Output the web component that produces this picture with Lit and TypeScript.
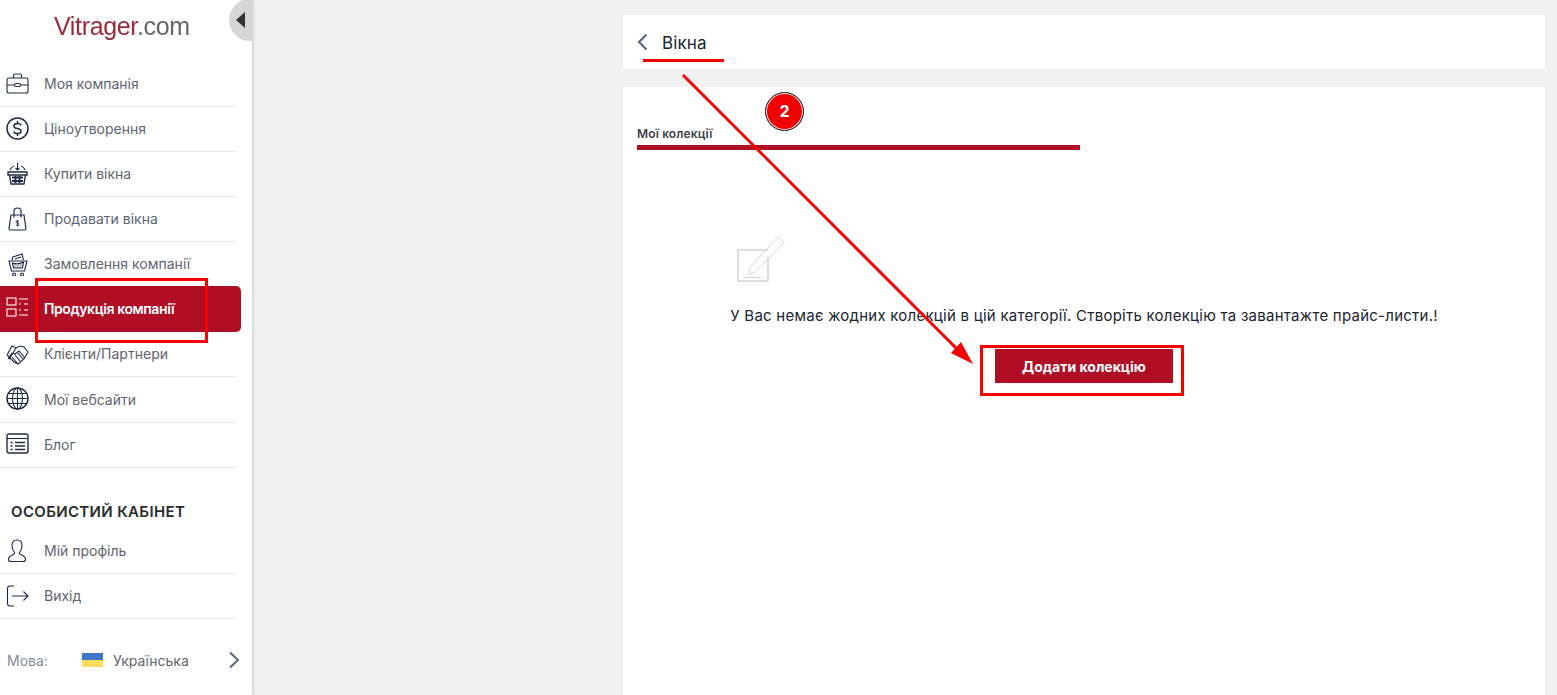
import { LitElement, css, html, svg } from 'lit';
import { customElement } from 'lit/decorators.js';

const icons: Record<string, unknown> = {
  briefcase: svg`<rect x="1" y="6" width="21" height="15" rx="2"/><path d="M7.500 6V3.500q0-1.500 1.500-1.500h5q1.500 0 1.500 1.500V6M1 13h7.500M14.500 13H22"/><rect x="8.500" y="11.500" width="6" height="3" rx="1.500"/>`,
  dollar: svg`<circle cx="11.500" cy="11.500" r="10.500" stroke-width="1.500"/><path d="M15 8.500q-.5-2-3.500-2-3.500 0-3.500 2.400 0 2.100 3.500 2.600t3.500 2.700q0 2.400-3.500 2.400-3 0-3.700-2.200M11.500 4v2.500M11.500 16.500V19" stroke-width="1.500"/>`,
  basket: svg`<path d="M4 8q1-3 4-4M19 8q-1-3-4-4M11.500 1v7M9.500 6l2 2 2-2"/><path d="M2 10h19v3H2zM3.500 13l1.500 9h13l1.500-9" stroke-width="1.400"/><path d="M6 15.500h11M6 19h11M9.500 14v7M13.500 14v7" stroke-width="1.800"/>`,
  bag: svg`<path d="M5 8h13l2 13.500q0 1.500-1.500 1.500h-14Q3 23 3 21.500zM8 10.500V4q0-3 3.500-3T15 4v6.500" stroke-width="1.200"/><path d="M13 14.500q-.5-.8-1.500-.8-1.500 0-1.500 1.100t1.500 1.300 1.500 1.300-1.500 1.100q-1 0-1.500-.8M11.500 13v6.500" stroke-width=".9"/>`,
  cart: svg`<path d="M3 9h18l-2.500 10H5.500zM6 8l1-3 9-3 1.500 6M9 7l6-2"/><path d="M6.500 11q5 2 11-1l-1 6h-9z" fill="#1f2a44" fill-opacity=".25"/><circle cx="8" cy="22.500" r="1.500"/><circle cx="16" cy="22.500" r="1.500"/>`,
  products: svg`<rect x="1" y="1" width="9" height="7"/><rect x="1" y="12" width="9" height="7"/><path d="M13 2h9M13 7h2M18 7h4M13 13h2M18 13h4M13 18h9"/>`,
  hands: svg`<path d="M1 13l5-9 4 2 4-2 4 1 4 5-4 7-6 5-4-2-3-3zM10 6l-3 5 2 1 4-3 6 7M6 15l5 6M9 13l5 6M12 11l5 6"/><path d="M2.500 17l4-6" stroke-width="2"/>`,
  globe: svg`<circle cx="11.500" cy="11.500" r="10.500" stroke-width="1.400"/><ellipse cx="11.500" cy="11.500" rx="5" ry="10.500"/><path d="M11.500 1v21M1 11.500h21M2.500 6.500h18M2.500 16.500h18"/>`,
  blog: svg`<rect x="1" y="1" width="21" height="19" rx="2" stroke-width="1.400"/><path d="M1 5.500h21"/><path d="M4.500 9.500h2M4.500 13h2M4.500 16.500h2M9 9.500h10M9 13h10M9 16.500h10" stroke-width="1.600"/>`,
  profile: svg`<path d="M8.500 13.500q-2.500-3-2.500-7 0-5.500 5-5.500t5 5.500q0 4-2.500 7-.5 1.500 2 2.500 4 1.500 4 4.500 0 2-2.500 2H5q-2.500 0-2.500-2 0-3 4-4.500 2.500-1 2-2.500z"/>`,
  logout: svg`<path d="M8 2H4Q1.500 2 1.500 4.500v15Q1.500 22 4 22h4M6 12h16M17.500 7.500 22 12l-4.500 4.500"/>`,
};

const menu = [
  ['briefcase', 'Моя компанія'],
  ['dollar', 'Ціноутворення'],
  ['basket', 'Купити вікна'],
  ['bag', 'Продавати вікна'],
  ['cart', 'Замовлення компанії'],
  ['products', 'Продукція компанії'],
  ['hands', 'Клієнти/Партнери'],
  ['globe', 'Мої вебсайти'],
  ['blog', 'Блог'],
];

const cabinet = [
  ['profile', 'Мій профіль'],
  ['logout', 'Вихід'],
];

@customElement('app-root')
export class AppRoot extends LitElement {
  static override styles = css`
    :host {
      display: block;
      position: relative;
      height: 100vh;
      overflow: hidden;
      background: #f1f1f1;
      font-family: Inter, 'Noto Sans', sans-serif;
      color: #1c2230;
    }
    .page {
      display: flex;
      height: 100%;
    }
    .sidebar {
      flex: 0 0 252px;
      position: relative;
      overflow: hidden;
      background: #fff;
      box-shadow: 1px 0 3px rgba(0, 0, 0, 0.18);
      box-sizing: border-box;
      padding-top: 62px;
    }
    .toggle {
      position: absolute;
      left: 229px;
      top: -1px;
      width: 42px;
      height: 42px;
      border-radius: 50%;
      background: #d6d6d6;
    }
    .toggle::after {
      content: '';
      position: absolute;
      left: 7px;
      top: 13px;
      border-style: solid;
      border-width: 8px 9px 8px 0;
      border-color: transparent #333 transparent transparent;
    }
    .logo {
      position: absolute;
      left: 54px;
      top: 12px;
      font: 25px 'Liberation Sans', Arial, sans-serif;
      letter-spacing: -0.35px;
      color: #9c2b3c;
      filter: blur(0.3px);
    }
    .logo span {
      color: #666;
    }
    .item {
      display: flex;
      align-items: center;
      box-sizing: border-box;
      height: 45px;
      width: 236px;
      padding-bottom: 1px;
      border-bottom: 1px solid #e8e8e8;
      font-size: 14px;
      color: #5e6471;
    }
    .item:has(+ .active) {
      height: 44px;
      border-bottom: 0;
    }
    .active + .item + .item {
      height: 46px;
    }
    .item svg {
      flex: 0 0 24px;
      width: 24px;
      height: 24px;
      margin: 0 14px 0 6px;
      fill: none;
      stroke: #1f2a44;
      stroke-width: 1.100;
    }
    .item.active {
      width: 241px;
      height: 46px;
      border: 0;
      border-radius: 0 5px 5px 0;
      background: #b00e24;
      color: #fff;
      font-weight: 600;
      letter-spacing: -0.4px;
    }
    .item.active svg {
      stroke: #fff;
    }
    .section {
      margin: 33px 0 0 11px;
      height: 22px;
      line-height: 22px;
      font-size: 15px;
      font-weight: 600;
      letter-spacing: 0.35px;
      color: #2b2b2b;
    }
    .cabinet {
      margin-top: 6px;
    }
    .lang {
      display: flex;
      align-items: center;
      margin-top: 19px;
      padding-left: 7px;
      width: 233px;
      height: 44px;
      font-size: 14px;
      color: #5e6471;
    }
    .lang .label {
      width: 75px;
      color: #858b97;
    }
    .flag {
      width: 21px;
      height: 14px;
      margin-right: 10px;
      background: linear-gradient(#3f78c9 50%, #ffdc5c 50%);
    }
    .lang .name {
      flex: 1;
    }
    .lang svg {
      width: 12px;
      height: 18px;
      fill: none;
      stroke: #5e6780;
      stroke-width: 2;
    }
    .main {
      flex: 1;
      display: flex;
      flex-direction: column;
      gap: 18px;
      padding: 15px 12px 0 371px;
      min-width: 0;
    }
    .topbar {
      display: flex;
      align-items: center;
      gap: 14px;
      height: 54px;
      padding-left: 14px;
      background: #fff;
      border-radius: 3px;
      font-size: 17px;
      letter-spacing: 0.1px;
      color: #20242e;
    }
    .topbar span {
      padding-top: 2px;
    }
    .topbar svg {
      width: 11px;
      height: 18px;
      fill: none;
      stroke: #5e6780;
      stroke-width: 2.200;
    }
    .card {
      flex: 1;
      background: #fff;
      border-radius: 3px 3px 0 0;
      padding: 39px 14px 0;
    }
    .tab {
      width: 443px;
      font-size: 12px;
      font-weight: 600;
      letter-spacing: 0.15px;
      line-height: 15px;
      color: #3b404c;
      padding-bottom: 4px;
      border-bottom: 5px solid #b00e24;
    }
    .empty {
      display: flex;
      flex-direction: column;
      align-items: center;
      margin-top: 86px;
    }
    .notice {
      display: flex;
      flex-direction: column;
    }
    .notice svg {
      width: 48px;
      height: 46px;
      margin-left: 7px;
      fill: none;
      stroke: #d4d4d4;
    }
    .notice p {
      margin: 22px 0 0;
      font-size: 15px;
      letter-spacing: 0.25px;
      line-height: 24px;
      color: #20242e;
    }
    .add {
      margin-top: 21px;
      width: 178px;
      height: 34px;
      border: 0;
      padding: 0;
      background: #b00e24;
      color: #fff;
      font: 700 14px Inter, 'Noto Sans', sans-serif;
    }
    .marks {
      position: absolute;
      inset: 0;
      width: 100%;
      height: 100%;
      pointer-events: none;
    }
    .badge {
      position: absolute;
      left: 765px;
      top: 92px;
      box-sizing: border-box;
      width: 39px;
      height: 39px;
      border-radius: 50%;
      background: #f00000;
      border: 1px solid #222;
      box-shadow: inset 0 0 0 1px #fff;
      color: #fff;
      font-size: 16px;
      font-weight: 700;
      line-height: 37px;
      text-align: center;
    }
  `;

  override render() {
    return html`
      <div class="page">
        <nav class="sidebar">
          <div class="logo">Vitrager<span>.com</span></div>
          <div class="toggle"></div>
          ${menu.map(([icon, label]) => this._item(icon, label))}
          <div class="section">ОСОБИСТИЙ КАБІНЕТ</div>
          <div class="cabinet">${cabinet.map(([icon, label]) => this._item(icon, label))}</div>
          <div class="lang">
            <span class="label">Мова:</span>
            <span class="flag"></span>
            <span class="name">Українська</span>
            <svg viewBox="0 0 12 18"><path d="M2 1.500 10 9l-8 7.500"/></svg>
          </div>
        </nav>
        <main class="main">
          <header class="topbar">
            <svg viewBox="0 0 11 18"><path d="M9.500 1.500 2 9l7.500 7.500"/></svg>
            <span>Вікна</span>
          </header>
          <section class="card">
            <div class="tab">Мої колекції</div>
            <div class="empty">
              <div class="notice">
                <svg viewBox="0 0 48 46">
                  <path d="M31 14H1v31h30V21" stroke-width="1.500"/>
                  <path d="M13 31.500 41 1l6 5.500-29 30-6 1.500zM6 41.500h19"/>
                </svg>
                <p>У Вас немає жодних колекцій в цій категорії. Створіть колекцію та завантажте прайс-листи.!</p>
              </div>
              <button class="add">Додати колекцію</button>
            </div>
          </section>
        </main>
      </div>
      <svg class="marks" viewBox="0 0 1557 695">
        <g fill="none" stroke="#f60000">
          <rect x="36.500" y="279.500" width="170" height="62" stroke-width="3"/>
          <rect x="981.500" y="346.500" width="201" height="48" stroke-width="3"/>
          <path d="M643 60.500h81" stroke-width="3"/>
          <path d="M683 75 960 352" stroke-width="3"/>
        </g>
        <path d="M973 364 951 353 961 342z" fill="#f60000"/>
      </svg>
      <div class="badge">2</div>
    `;
  }

  private _item(icon: string, label: string) {
    return html`
      <div class="item ${icon === 'products' ? 'active' : ''}">
        <svg viewBox="0 0 24 24">${icons[icon]}</svg>
        <span>${label}</span>
      </div>
    `;
  }
}
